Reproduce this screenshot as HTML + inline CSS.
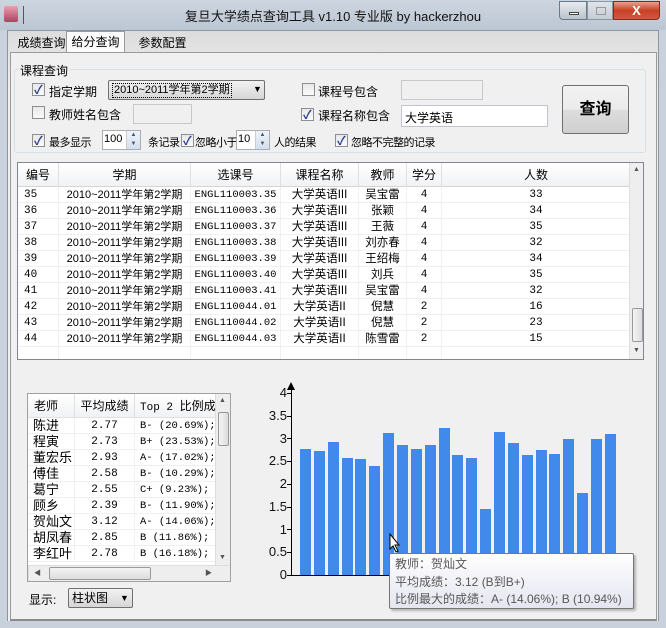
<!DOCTYPE html>
<html><head><meta charset="utf-8"><style>
*{box-sizing:border-box;margin:0;padding:0}
body{width:666px;height:628px;position:relative;overflow:hidden;background:#c9d2dc;font-family:"Liberation Sans","Noto Sans CJK SC",sans-serif;font-size:12px;color:#000}
.a{position:absolute;white-space:nowrap}
.cb{position:absolute;width:13px;height:13px;border:1px solid #8f8f8f;background:linear-gradient(#e8e8e8,#fafafa)}
.cb.c::after{content:"✓";position:absolute;left:1px;top:-3px;font-size:12px;color:#2a3f8f;font-weight:bold}
.in{position:absolute;border:1px solid #abadb3;background:#f0f0f0}
.mono{font-family:"Liberation Mono","Noto Sans CJK SC",monospace;font-size:11px}
.row{position:absolute;left:0;height:16px;border-bottom:1px solid #f0f0f0;white-space:nowrap;overflow:hidden}
.row span,.hd span{position:absolute;top:0;text-align:center;white-space:nowrap;overflow:hidden}
.bar{position:absolute;background:#4189ea;width:11px;bottom:0}
.sb{position:absolute;background:#eeeeee;border-left:1px solid #ddd}
.l{font-size:12px}
.s{font-size:11px;letter-spacing:-0.5px}
</style></head><body>
<div class="a" style="left:0;top:0;width:666px;height:30px;background:linear-gradient(#cdd5df,#bcc7d4)"></div>
<div class="a" style="left:4px;top:6px;width:14px;height:16px;background:linear-gradient(#e9a0b0,#b04060);border-radius:2px"></div>
<div class="a" style="left:23px;top:6px;width:1px;height:18px;background:#555"></div>
<div class="a" style="left:0;top:6px;width:666px;text-align:center;font-size:13px;color:#111">复旦大学绩点查询工具 v1.10 专业版 by hackerzhou</div>
<div class="a" style="left:559px;top:1px;width:28px;height:19px;border:1px solid #6a7a8a;border-radius:0 0 0 4px;background:linear-gradient(#e8ecf0,#b8c2cc)"><div class="a" style="left:9px;top:10px;width:10px;height:3px;background:#fff;border:1px solid #444"></div></div>
<div class="a" style="left:587px;top:1px;width:26px;height:19px;border:1px solid #8a96a2;background:linear-gradient(#e0e4e8,#c4ccd4)"><div class="a" style="left:8px;top:5px;width:10px;height:8px;border:1px solid #999"></div></div>
<div class="a" style="left:613px;top:1px;width:47px;height:19px;border:1px solid #7a3020;border-radius:0 0 4px 0;background:linear-gradient(#e8a090,#c84028 50%,#d05a40);color:#fff;font-weight:bold;text-align:center;font-size:13px;line-height:17px">X</div>
<div class="a" style="left:7px;top:30px;width:652px;height:591px;background:linear-gradient(#dcdcdc,#f0f0f0 60px);border:1px solid #8a96a2;border-bottom:none"></div>
<div class="a" style="left:8px;top:35px;width:67px;height:19px;text-align:center;line-height:17px;font-size:12px">成绩查询</div>
<div class="a" style="left:66px;top:31px;width:59px;height:22px;background:#fbfbfb;border:1px solid #9a9a9a;border-bottom:none;text-align:center;line-height:20px;font-size:12px">给分查询</div>
<div class="a" style="left:130px;top:35px;width:65px;height:19px;text-align:center;line-height:17px;font-size:12px">参数配置</div>
<div class="a" style="left:10px;top:52px;width:647px;height:569px;background:#f0f0f0;border:1px solid #9a9a9a;border-bottom:2px solid #8a8a8a"></div>
<div class="a" style="left:14px;top:69px;width:632px;height:84px;border:1px solid #d5dfe5;border-radius:3px"></div>
<div class="a l" style="left:18px;top:62px;background:#f0f0f0;padding:0 2px">课程查询</div>
<div class="cb c" style="left:32px;top:83px"></div><div class="a l" style="left:49px;top:83px">指定学期</div>
<div class="a" style="left:108px;top:80px;width:157px;height:20px;border:1px solid #707070;border-radius:2px;background:linear-gradient(#f2f2f2,#d6d6d6)"><div class="a" style="left:3px;top:2px;border:1px dotted #000;padding:0 1px;font-size:11px;line-height:13px">2010~2011学年第2学期</div><div class="a" style="left:144px;top:3px;font-size:9px">▼</div></div>
<div class="cb" style="left:302px;top:83px"></div><div class="a l" style="left:318px;top:83px">课程号包含</div>
<div class="in" style="left:401px;top:80px;width:82px;height:20px;border-color:#c8c8c8"></div>
<div class="cb" style="left:32px;top:106px"></div><div class="a l" style="left:49px;top:106px">教师姓名包含</div>
<div class="in" style="left:133px;top:104px;width:59px;height:20px;border-color:#c8c8c8"></div>
<div class="cb c" style="left:301px;top:108px"></div><div class="a l" style="left:318px;top:107px">课程名称包含</div>
<div class="in" style="left:401px;top:105px;width:147px;height:22px;background:#fff;border-color:#c0c4cc;padding:3px 3px;font-size:12px">大学英语</div>
<div class="a" style="left:562px;top:85px;width:67px;height:49px;border:1px solid #707070;border-radius:3px;background:linear-gradient(#f2f2f2,#ebebeb 50%,#dddddd 51%,#cfcfcf);text-align:center;line-height:47px;font-size:16px;font-weight:bold">查询</div>
<div class="cb c" style="left:32px;top:134px"></div><div class="a s" style="left:49px;top:134px">最多显示</div>
<div class="in" style="left:102px;top:130px;width:39px;height:20px;background:#fff;font-size:11px;padding:2px 1px">100</div>
<div class="a" style="left:126px;top:131px;width:14px;height:18px;border-left:1px solid #ccc;background:linear-gradient(#eef3fa,#d4dfee);font-size:6px;color:#456;text-align:center;line-height:9px">▲<br>▼</div>
<div class="a s" style="left:148px;top:134px">条记录</div>
<div class="cb c" style="left:181px;top:134px"></div><div class="a s" style="left:195px;top:134px">忽略小于</div>
<div class="in" style="left:236px;top:130px;width:34px;height:20px;background:#fff;font-size:11px;padding:2px 1px">10</div>
<div class="a" style="left:255px;top:131px;width:14px;height:18px;border-left:1px solid #ccc;background:linear-gradient(#eef3fa,#d4dfee);font-size:6px;color:#456;text-align:center;line-height:9px">▲<br>▼</div>
<div class="a s" style="left:274px;top:134px">人的结果</div>
<div class="cb c" style="left:335px;top:134px"></div><div class="a s" style="left:351px;top:134px">忽略不完整的记录</div>
<div class="a" style="left:17px;top:162px;width:627px;height:198px;background:#fff;border:1px solid #828790;overflow:hidden">
<div class="hd a" style="left:0;top:0;width:612px;height:24px;background:linear-gradient(#fff,#f1f2f4);border-bottom:1px solid #d5d5d5;font-size:12px;line-height:24px">
<span style="left:0;width:40px">编号</span><span style="left:40px;width:132px;border-left:1px solid #e0e0e0">学期</span><span style="left:172px;width:90px;border-left:1px solid #e0e0e0">选课号</span><span style="left:262px;width:78px;border-left:1px solid #e0e0e0">课程名称</span><span style="left:340px;width:48px;border-left:1px solid #e0e0e0">教师</span><span style="left:388px;width:35px;border-left:1px solid #e0e0e0">学分</span><span style="left:423px;width:189px;border-left:1px solid #e0e0e0">人数</span></div>
<div id="rows"></div>
<div class="sb" style="left:611px;top:0;width:15px;height:196px"><div class="a" style="left:2px;top:145px;width:11px;height:34px;border:1px solid #999;border-radius:2px;background:linear-gradient(90deg,#f4f4f4,#dcdcdc)"></div><div class="a" style="left:3px;top:3px;font-size:7px;color:#555">▲</div><div class="a" style="left:3px;top:184px;font-size:7px;color:#555">▼</div></div>
</div>
<div class="a" style="left:27px;top:393px;width:204px;height:189px;background:#fff;border:1px solid #a0a0a0;overflow:hidden">
<div class="hd a" style="left:0;top:0;width:188px;height:24px;background:linear-gradient(#fff,#f1f2f4);border-bottom:1px solid #e0e0e0;font-size:12px;line-height:24px">
<span style="left:0;width:46px;text-align:left;padding-left:6px">老师</span><span style="left:46px;width:60px;border-left:1px solid #e0e0e0">平均成绩</span><span style="left:106px;width:82px;border-left:1px solid #e0e0e0;text-align:left;padding-left:5px"><span class="mono" style="position:static">Top 2 </span>比例成</span></div>
<div id="rows2"></div>
<div class="sb" style="left:187px;top:0;width:15px;height:172px"><div class="a" style="left:2px;top:18px;width:11px;height:34px;border:1px solid #999;border-radius:2px;background:linear-gradient(90deg,#f4f4f4,#dcdcdc)"></div><div class="a" style="left:3px;top:3px;font-size:7px;color:#555">▲</div><div class="a" style="left:3px;top:160px;font-size:7px;color:#555">▼</div></div>
<div class="sb" style="left:0;top:171px;width:202px;height:16px;border-top:1px solid #ddd"><div class="a" style="left:20px;top:1px;width:102px;height:13px;border:1px solid #999;border-radius:2px;background:linear-gradient(#f4f4f4,#dcdcdc)"></div><div class="a" style="left:5px;top:2px;font-size:7px;color:#555">◀</div><div class="a" style="left:176px;top:2px;font-size:7px;color:#555">▶</div></div>
</div>
<div class="a l" style="left:29px;top:591px">显示:</div>
<div class="a" style="left:68px;top:588px;width:65px;height:20px;border:1px solid #707070;border-radius:2px;background:linear-gradient(#f2f2f2,#d6d6d6);font-size:12px;padding-left:3px;line-height:18px">柱状图<span style="position:absolute;left:51px;font-size:9px">▼</span></div>
<div class="a" style="left:291px;top:389px;width:1px;height:187px;background:#000"></div>
<div class="a" style="left:287px;top:382px;width:0;height:0;border-left:4px solid transparent;border-right:4px solid transparent;border-bottom:8px solid #000"></div>
<div class="a" style="left:291px;top:575px;width:335px;height:1px;background:#000"></div>
<div id="yl"></div>
<div id="bars" class="a" style="left:0;top:0;width:666px;height:575px"></div>
<svg class="a" style="left:389px;top:533px" width="12" height="20"><path d="M1 1 L1 16 L4 13 L7 19 L9 18 L6 12 L10 12 Z" fill="#fff" stroke="#000" stroke-width="1"/></svg>
<div class="a" style="left:389px;top:553px;width:245px;height:56px;border:1px solid #767676;border-radius:2px;background:linear-gradient(#fff,#e4e5f0);box-shadow:2px 2px 2px rgba(0,0,0,.25);font-size:12px;color:#575757;padding:2px 5px;line-height:17.5px">教师：贺灿文<br>平均成绩：3.12 (B到B+)<br>比例最大的成绩：A- (14.06%); B (10.94%)</div>
<script>
var d=[[35,"ENGL110003.35","大学英语III","吴宝雷",4,33],[36,"ENGL110003.36","大学英语III","张颖",4,34],[37,"ENGL110003.37","大学英语III","王薇",4,35],[38,"ENGL110003.38","大学英语III","刘亦春",4,32],[39,"ENGL110003.39","大学英语III","王绍梅",4,34],[40,"ENGL110003.40","大学英语III","刘兵",4,35],[41,"ENGL110003.41","大学英语III","吴宝雷",4,32],[42,"ENGL110044.01","大学英语II","倪慧",2,16],[43,"ENGL110044.02","大学英语II","倪慧",2,23],[44,"ENGL110044.03","大学英语II","陈雪雷",2,15]];
var h="";d.forEach(function(r,i){h+='<div class="row" style="top:'+(24+i*16)+'px;width:612px;font-size:11.5px;line-height:16px"><span class="mono" style="left:6px">'+r[0]+'</span><span style="left:40px;width:132px;border-left:1px solid #f0f0f0;font-size:11px">2010~2011学年第2学期</span><span class="mono" style="left:172px;width:90px;border-left:1px solid #f0f0f0;font-size:10.5px">'+r[1]+'</span><span style="left:262px;width:78px;border-left:1px solid #f0f0f0">'+r[2]+'</span><span style="left:340px;width:48px;border-left:1px solid #f0f0f0">'+r[3]+'</span><span class="mono" style="left:388px;width:35px;border-left:1px solid #f0f0f0">'+r[4]+'</span><span class="mono" style="left:423px;width:189px;border-left:1px solid #f0f0f0">'+r[5]+'</span></div>'});
h+='<div class="row" style="top:184px;width:612px"><span style="left:40px;height:16px;border-left:1px solid #f0f0f0"></span><span style="left:172px;height:16px;border-left:1px solid #f0f0f0"></span><span style="left:262px;height:16px;border-left:1px solid #f0f0f0"></span><span style="left:340px;height:16px;border-left:1px solid #f0f0f0"></span><span style="left:388px;height:16px;border-left:1px solid #f0f0f0"></span><span style="left:423px;height:16px;border-left:1px solid #f0f0f0"></span></div>';
document.getElementById("rows").innerHTML=h;
var t=[["陈进","2.77","B- (20.69%);"],["程寅","2.73","B+ (23.53%);"],["董宏乐","2.93","A- (17.02%);"],["傅佳","2.58","B- (10.29%);"],["葛宁","2.55","C+ (9.23%);"],["顾乡","2.39","B- (11.90%);"],["贺灿文","3.12","A- (14.06%);"],["胡凤春","2.85","B (11.86%);"],["李红叶","2.78","B (16.18%);"]];
h="";t.forEach(function(r,i){h+='<div class="row" style="top:'+(24+i*16)+'px;width:188px;height:16px;font-size:13px;line-height:16px"><span style="left:5px">'+r[0]+'</span><span class="mono" style="left:46px;width:60px;border-left:1px solid #f0f0f0;line-height:16px">'+r[1]+'</span><span class="mono" style="left:106px;width:82px;border-left:1px solid #f0f0f0;text-align:left;padding-left:5px;line-height:16px;font-size:10.5px">'+r[2]+'</span></div>'});
document.getElementById("rows2").innerHTML=h;
var v=[2.77,2.73,2.93,2.58,2.55,2.39,3.12,2.85,2.78,2.85,3.22,2.63,2.58,1.45,3.15,2.91,2.63,2.74,2.67,2.98,1.81,2.98,3.09];
h="";v.forEach(function(x,i){var hh=Math.round(x*45.5);h+='<div class="bar" style="left:'+Math.round(300+i*13.86)+'px;top:'+(575-hh)+'px;height:'+hh+'px"></div>'});
document.getElementById("bars").innerHTML=h;
h="";["0","0.5","1","1.5","2","2.5","3","3.5","4"].forEach(function(l,i){h+='<div class="a" style="right:'+(666-287)+'px;top:'+(567-i*22.75)+'px;font-size:13px;color:#111">'+l+'</div><div class="a" style="left:287px;top:'+(575-Math.round(i*22.75))+'px;width:4px;height:1px;background:#000"></div>'});
document.getElementById("yl").innerHTML=h;
</script>
</body></html>
